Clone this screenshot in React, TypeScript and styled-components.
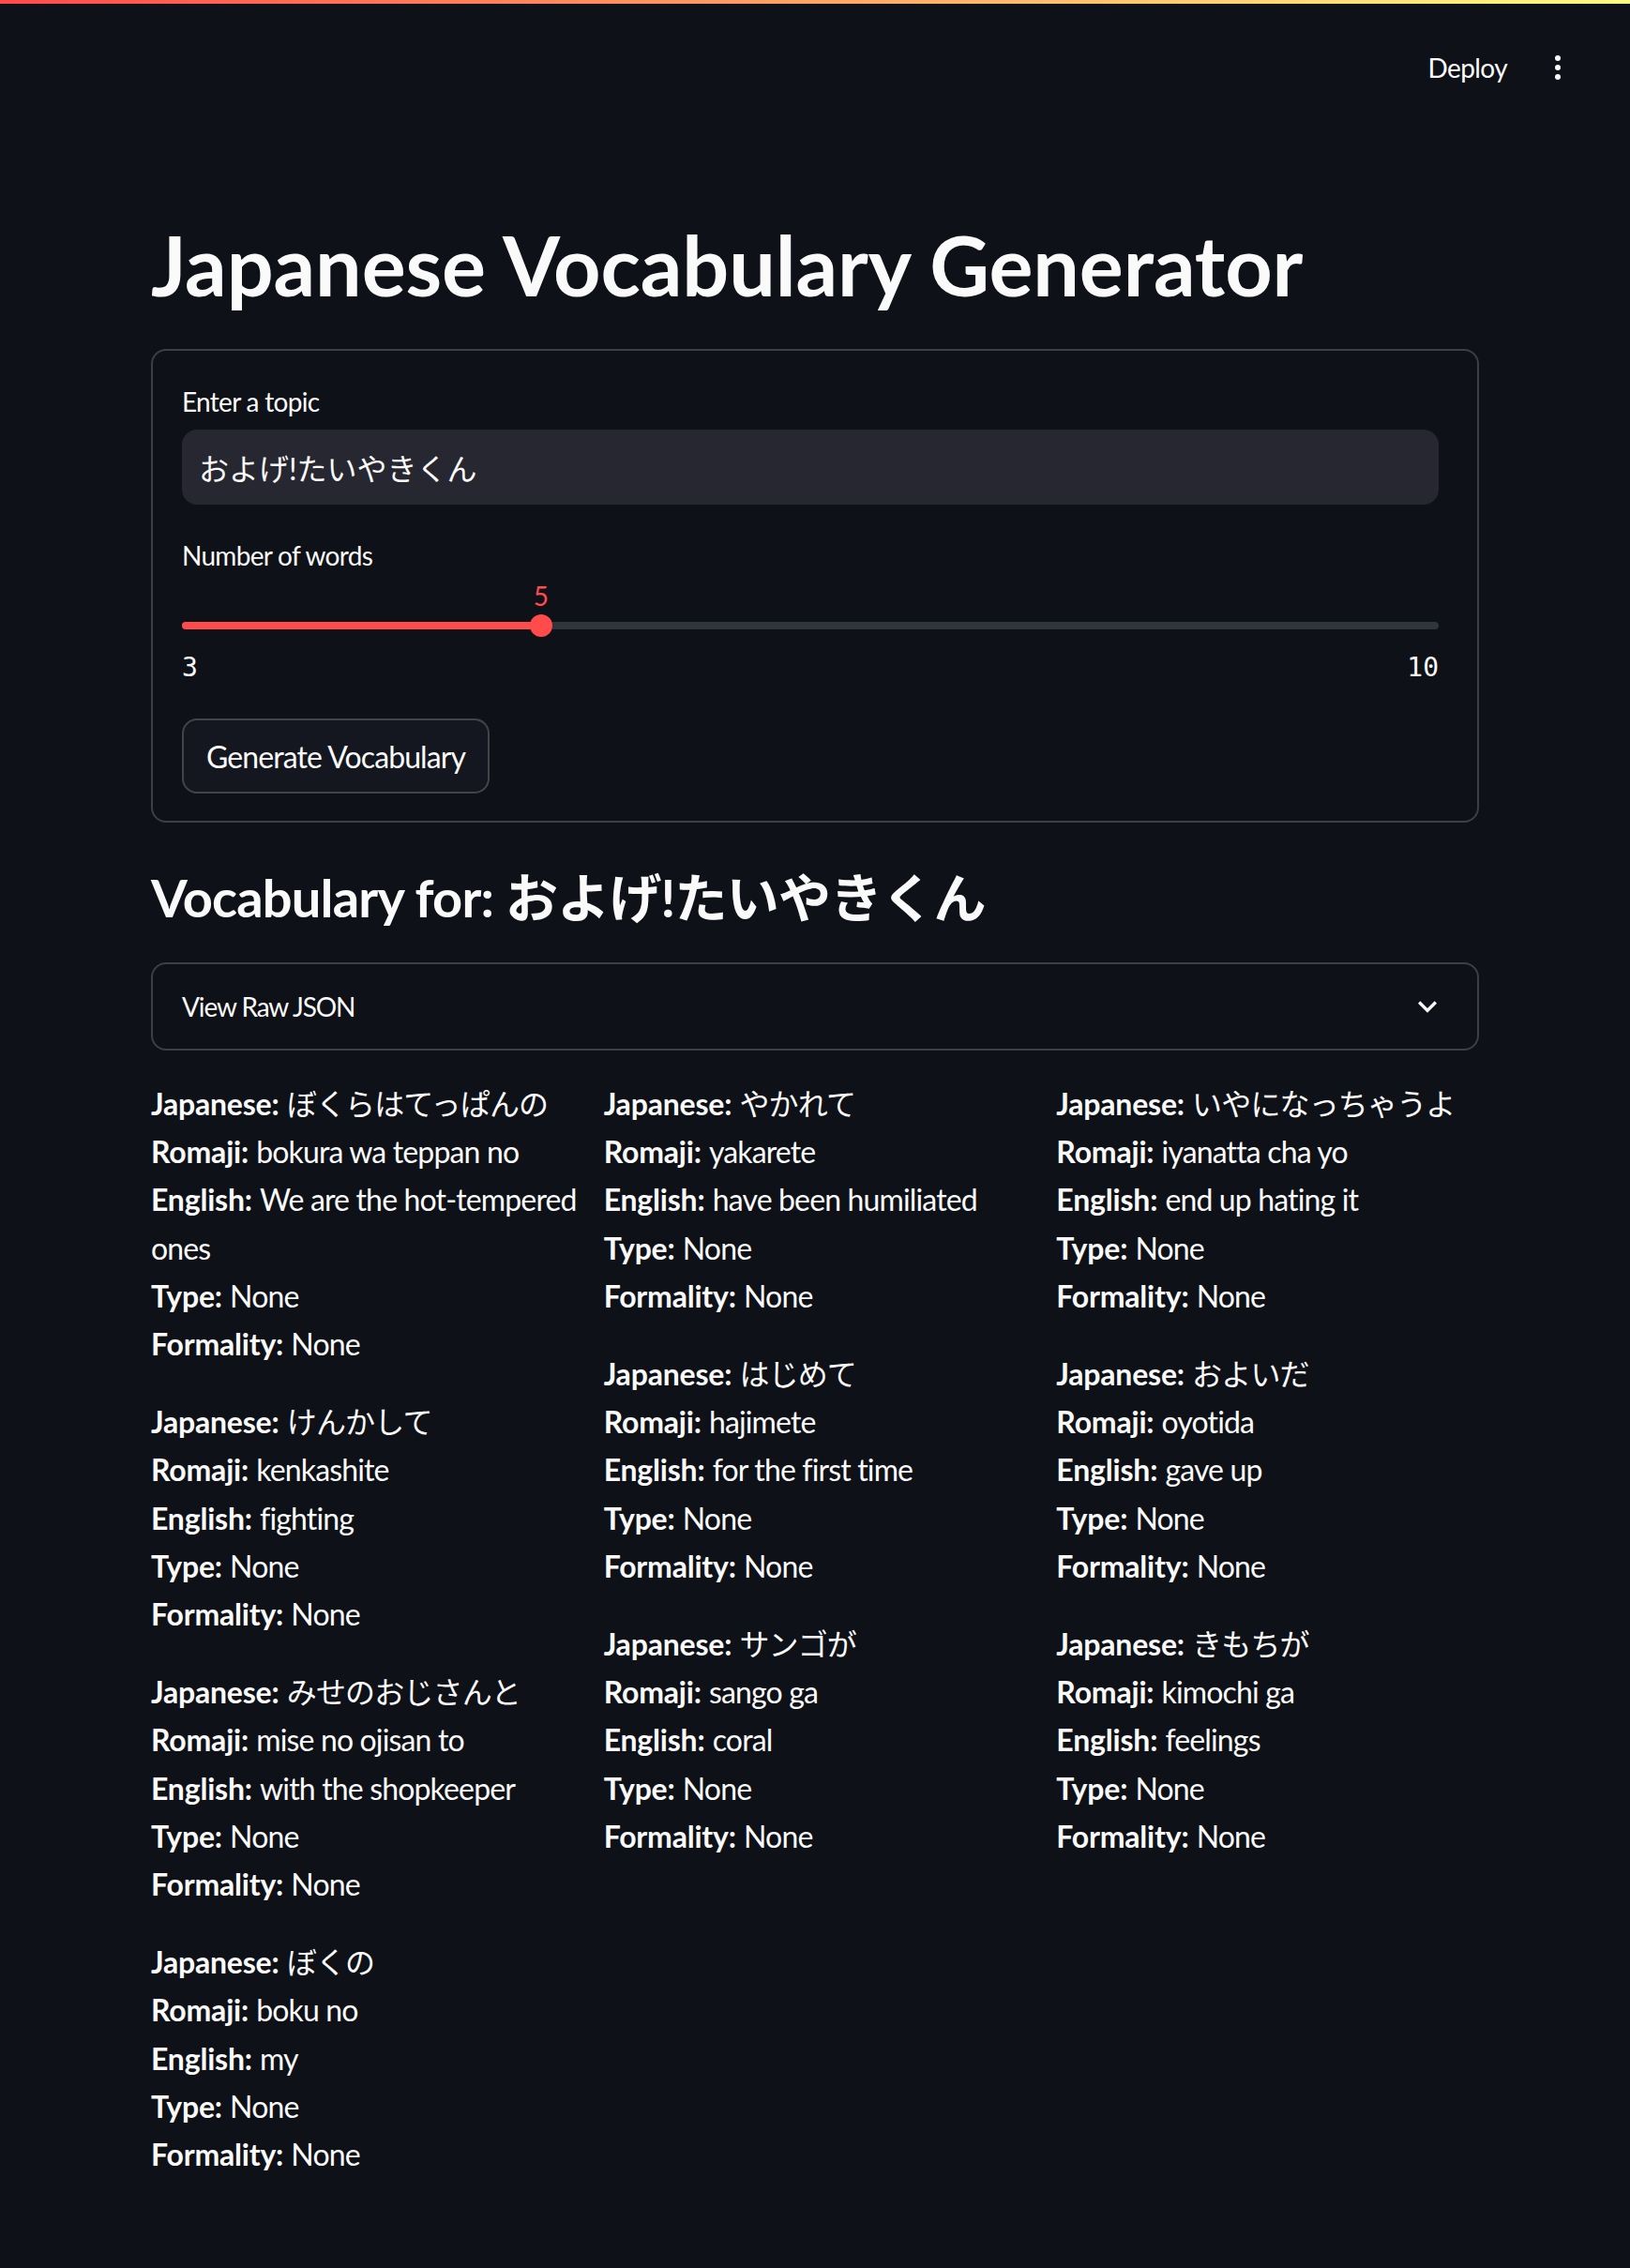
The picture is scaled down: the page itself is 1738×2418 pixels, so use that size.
import React, { useState } from 'react';
import styled, { createGlobalStyle } from 'styled-components';

const SANS = `Lato, "Noto Sans CJK JP", sans-serif`;
const MONO = `"DejaVu Sans Mono", "Liberation Mono", monospace`;

type Word = {
  japanese: string;
  romaji: string;
  english: string;
  type: string;
  formality: string;
};

const words: Word[] = [
  { japanese: 'ぼくらはてっぱんの', romaji: 'bokura wa teppan no', english: 'We are the hot-tempered ones', type: 'None', formality: 'None' },
  { japanese: 'やかれて', romaji: 'yakarete', english: 'have been humiliated', type: 'None', formality: 'None' },
  { japanese: 'いやになっちゃうよ', romaji: 'iyanatta cha yo', english: 'end up hating it', type: 'None', formality: 'None' },
  { japanese: 'けんかして', romaji: 'kenkashite', english: 'fighting', type: 'None', formality: 'None' },
  { japanese: 'はじめて', romaji: 'hajimete', english: 'for the first time', type: 'None', formality: 'None' },
  { japanese: 'およいだ', romaji: 'oyotida', english: 'gave up', type: 'None', formality: 'None' },
  { japanese: 'みせのおじさんと', romaji: 'mise no ojisan to', english: 'with the shopkeeper', type: 'None', formality: 'None' },
  { japanese: 'サンゴが', romaji: 'sango ga', english: 'coral', type: 'None', formality: 'None' },
  { japanese: 'きもちが', romaji: 'kimochi ga', english: 'feelings', type: 'None', formality: 'None' },
  { japanese: 'ぼくの', romaji: 'boku no', english: 'my', type: 'None', formality: 'None' },
];

const MIN = 3;
const MAX = 10;

function VocabEntry({ word }: { word: Word }) {
  const fields: [string, string][] = [
    ['Japanese', word.japanese],
    ['Romaji', word.romaji],
    ['English', word.english],
    ['Type', word.type],
    ['Formality', word.formality],
  ];
  return (
    <Entry>
      {fields.map(([key, value], i) => (
        <React.Fragment key={key}>
          {i > 0 && <br />}
          <FieldKey>{key}:</FieldKey> <FieldValue>{value}</FieldValue>
        </React.Fragment>
      ))}
    </Entry>
  );
}

function App() {
  const [topic] = useState('およげ!たいやきくん');
  const [count] = useState(5);
  const pct = ((count - MIN) / (MAX - MIN)) * 100;
  const columns: Word[][] = [[], [], []];
  words.forEach((w, i) => columns[i % 3].push(w));

  return (
    <>
      <GlobalStyle />
      <Decoration />
      <Header>
        <DeployButton>Deploy</DeployButton>
        <MenuButton aria-label='menu'>
          <svg width='40' height='40' viewBox='0 0 40 40'>
            <circle cx='20' cy='10' r='3' fill='#fafafa' />
            <circle cx='20' cy='20' r='3' fill='#fafafa' />
            <circle cx='20' cy='30' r='3' fill='#fafafa' />
          </svg>
        </MenuButton>
      </Header>
      <Main>
        <Title>Japanese Vocabulary Generator</Title>
        <Form>
          <Field>
            <Label>Enter a topic</Label>
            <TextInput value={topic} readOnly />
          </Field>
          <Field>
            <Label>Number of words</Label>
            <Slider>
              <Track>
                <TrackFill style={{ width: `${pct}%` }} />
                <Thumb style={{ left: `${pct}%` }}>
                  <ThumbValue>{count}</ThumbValue>
                </Thumb>
              </Track>
              <TickBar>
                <span>{MIN}</span>
                <span>{MAX}</span>
              </TickBar>
            </Slider>
          </Field>
          <SubmitButton type='button'>Generate Vocabulary</SubmitButton>
        </Form>
        <Subtitle>Vocabulary for: {topic}</Subtitle>
        <Expander>
          <ExpanderLabel>View Raw JSON</ExpanderLabel>
          <svg width='40' height='40' viewBox='0 0 24 24'>
            <path d='M16.59 8.59L12 13.17 7.41 8.59 6 10l6 6 6-6z' fill='#fafafa' />
          </svg>
        </Expander>
        <Columns>
          {columns.map((col, ci) => (
            <Column key={ci}>
              {col.map((w) => (
                <VocabEntry key={w.japanese} word={w} />
              ))}
            </Column>
          ))}
        </Columns>
      </Main>
    </>
  );
}

const GlobalStyle = createGlobalStyle`
  html, body {
    margin: 0;
    padding: 0;
    background: #0e1117;
    color: #fafafa;
    font-family: ${SANS};
  }
  #root {
    min-height: 100vh;
  }
`;

const Decoration = styled.div`
  height: 4px;
  background: linear-gradient(90deg, rgb(255, 75, 75), rgb(255, 253, 128));
`;

const Header = styled.header`
  height: 136px;
  display: flex;
  align-items: center;
  justify-content: flex-end;
  gap: 34px;
  padding-right: 57px;
  box-sizing: border-box;
`;

const DeployButton = styled.span`
  font-size: 28px;
  letter-spacing: -0.6px;
  color: #fafafa;
`;

const MenuButton = styled.div`
  width: 40px;
  height: 40px;
  display: flex;
`;

const Main = styled.main`
  width: 1416px;
  margin: 0 auto;
  padding-bottom: 100px;
`;

const Title = styled.h1`
  margin: 90px 0 0;
  font-size: 88px;
  line-height: 105px;
  font-weight: 700;
  letter-spacing: -0.1px;
`;

const Form = styled.div`
  margin-top: 37px;
  border: 2px solid rgba(250, 250, 250, 0.2);
  border-radius: 16px;
  padding: 32px 41px 29px 31px;
  display: flex;
  flex-direction: column;
  align-items: flex-start;
  gap: 32px;
`;

const Field = styled.div`
  width: 100%;
  display: flex;
  flex-direction: column;
`;

const Label = styled.label`
  font-size: 28px;
  letter-spacing: -0.7px;
  line-height: 44px;
  height: 44px;
  margin-bottom: 8px;
`;

const TextInput = styled.input`
  height: 80px;
  box-sizing: border-box;
  border: none;
  outline: none;
  border-radius: 16px;
  background: #262730;
  color: #fafafa;
  font-family: ${SANS};
  font-size: 32px;
  padding: 0 18px;
`;

const Slider = styled.div`
  padding-top: 41px;
  margin-top: -8px;
`;

const Track = styled.div`
  position: relative;
  height: 8px;
  margin: 8px 0;
  border-radius: 4px;
  background: #30343d;
`;

const TrackFill = styled.div`
  height: 100%;
  border-radius: 4px;
  background: #ff4b4b;
`;

const Thumb = styled.div`
  position: absolute;
  top: 50%;
  width: 24px;
  height: 24px;
  border-radius: 50%;
  background: #ff4b4b;
  transform: translate(-50%, -50%);
`;

const ThumbValue = styled.div`
  position: absolute;
  left: 50%;
  bottom: 28px;
  transform: translateX(-50%);
  color: #ff4b4b;
  font-size: 28px;
  line-height: 32px;
`;

const TickBar = styled.div`
  display: flex;
  justify-content: space-between;
  font-family: ${MONO};
  font-size: 28px;
  line-height: 44px;
  margin-top: 19px;
`;

const SubmitButton = styled.button`
  height: 80px;
  padding: 0 24px;
  border: 2px solid rgba(250, 250, 250, 0.2);
  border-radius: 16px;
  background: #14171f;
  color: #fafafa;
  font-family: ${SANS};
  font-size: 32px;
  letter-spacing: -0.9px;
`;

const Subtitle = styled.h3`
  margin: 46px 0 0;
  font-size: 56px;
  line-height: 68px;
  font-weight: 700;
  letter-spacing: -0.8px;
`;

const Expander = styled.div`
  margin-top: 35px;
  height: 94px;
  box-sizing: border-box;
  border: 2px solid rgba(250, 250, 250, 0.2);
  border-radius: 16px;
  display: flex;
  align-items: center;
  justify-content: space-between;
  padding: 0 33px 0 31px;
`;

const ExpanderLabel = styled.span`
  font-size: 28px;
  letter-spacing: -1.1px;
`;

const Columns = styled.div`
  margin-top: 31px;
  display: grid;
  grid-template-columns: repeat(3, 1fr);
  gap: 32px;
`;

const Column = styled.div`
  min-width: 0;
`;

const Entry = styled.p`
  margin: 0 -20px 32px 0;
  font-size: 32px;
  line-height: 51.2px;
`;

const FieldKey = styled.b`
  font-weight: 700;
  letter-spacing: -0.2px;
`;

const FieldValue = styled.span`
  letter-spacing: -0.85px;
`;

export default App;
